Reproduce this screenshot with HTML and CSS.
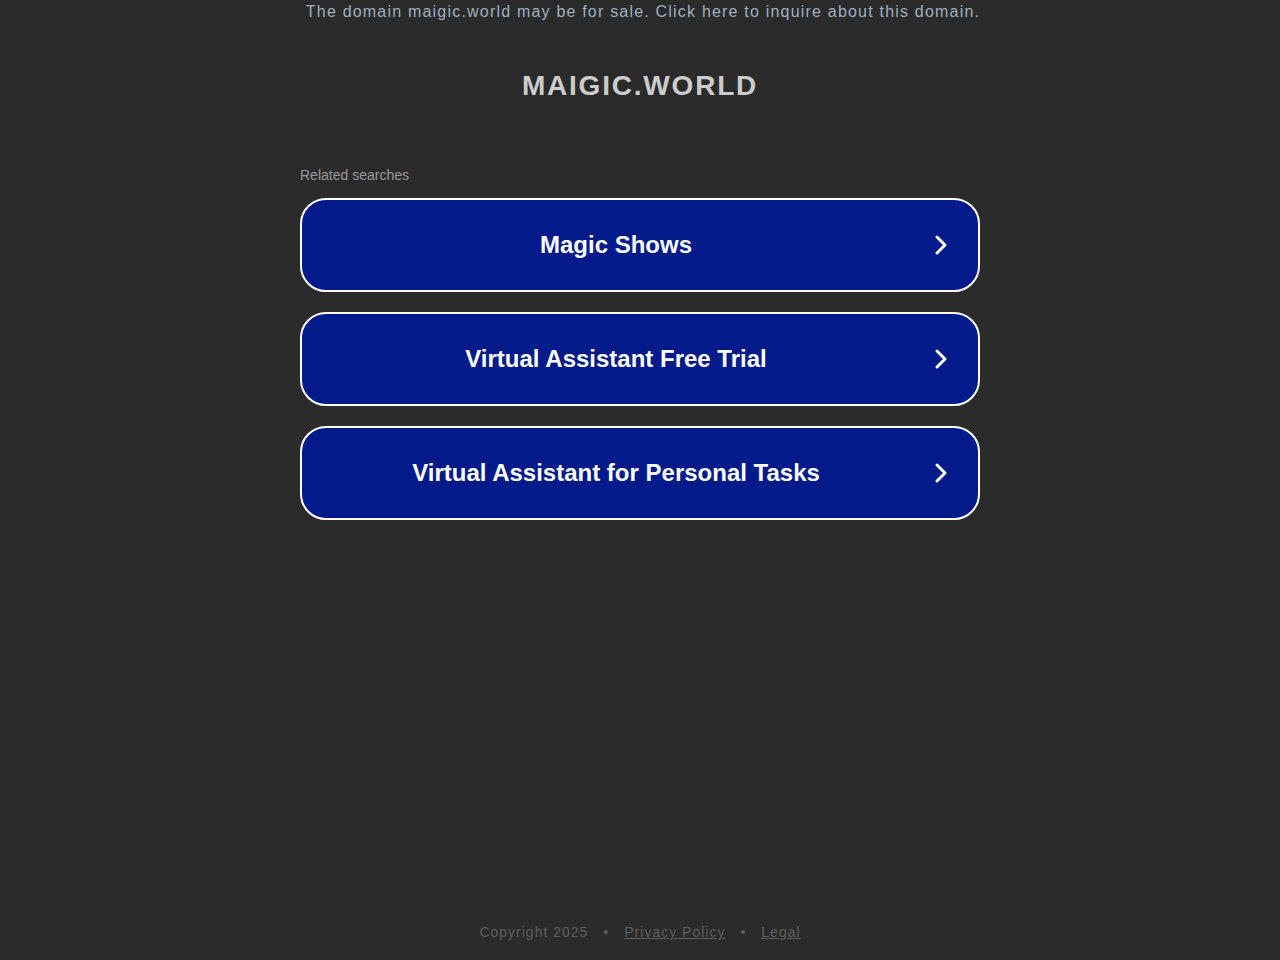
FILE: index.html
```html
<!DOCTYPE html>
<html>
<head>
<meta charset="utf-8">
<title>maigic.world</title>
<link rel="stylesheet" href="styles.css">
</head>
<body>
<div class="page">
  <div class="sale"><a href="#">The domain maigic.world may be for sale. Click here to inquire about this domain.</a></div>
  <h1 class="domain">MAIGIC.WORLD</h1>
  <div class="related">
    <div class="label">Related searches</div>
    <a class="item" href="#"><span class="item-text">Magic Shows</span><svg class="chev" viewBox="0 0 14 22" width="14" height="22"><path d="M3 3 L11 11 L3 19" fill="none" stroke="#fff" stroke-width="3" stroke-linecap="round" stroke-linejoin="round"/></svg></a>
    <a class="item" href="#"><span class="item-text">Virtual Assistant Free Trial</span><svg class="chev" viewBox="0 0 14 22" width="14" height="22"><path d="M3 3 L11 11 L3 19" fill="none" stroke="#fff" stroke-width="3" stroke-linecap="round" stroke-linejoin="round"/></svg></a>
    <a class="item" href="#"><span class="item-text">Virtual Assistant for Personal Tasks</span><svg class="chev" viewBox="0 0 14 22" width="14" height="22"><path d="M3 3 L11 11 L3 19" fill="none" stroke="#fff" stroke-width="3" stroke-linecap="round" stroke-linejoin="round"/></svg></a>
  </div>
  <div class="footer">
    <span>Copyright 2025</span><span class="dot">•</span><a href="#">Privacy Policy</a><span class="dot">•</span><a href="#">Legal</a>
  </div>
</div>
</body>
</html>
```
FILE: styles.css
```css
html, body {
  margin: 0;
  padding: 0;
  background: #2b2b2b;
}
body {
  font-family: "Liberation Sans", Arial, sans-serif;
}
.page {
  min-height: 960px;
  display: flex;
  flex-direction: column;
  align-items: center;
}
.sale {
  font-size: 16px;
  letter-spacing: 1.2px;
  line-height: 22px;
  padding-top: 1px;
  padding-left: 6px;
  text-align: center;
}
.sale a {
  color: #9fb0c0;
  text-decoration: none;
}
.domain {
  margin: 47px 0 0 0;
  font-size: 28px;
  line-height: 32px;
  font-weight: bold;
  letter-spacing: 1.8px;
  color: #cccccc;
}
.related {
  width: 680px;
  margin-top: 65px;
  display: flex;
  flex-direction: column;
}
.label {
  font-size: 14px;
  line-height: 16px;
  color: #999999;
  margin-bottom: 15px;
}
.item {
  box-sizing: border-box;
  height: 94px;
  margin-bottom: 20px;
  border: 2px solid #ffffff;
  border-radius: 26px;
  background: #021a8a;
  display: flex;
  align-items: center;
  text-decoration: none;
  padding: 0 30px 0 0;
}
.item-text {
  flex: 1;
  margin-right: 4px;
  text-align: center;
  color: #ffffff;
  font-size: 24px;
  font-weight: bold;
}
.chev {
  flex: none;
}
.footer {
  margin-top: auto;
  padding-bottom: 19px;
  font-size: 14px;
  line-height: 18px;
  letter-spacing: 1px;
  color: #5f5f5f;
}
.footer a {
  color: #5f5f5f;
}
.dot {
  margin: 0 15px;
}
```
